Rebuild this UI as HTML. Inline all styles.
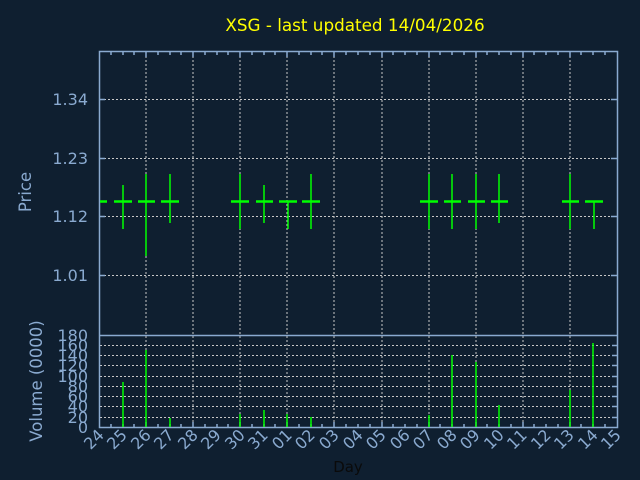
<!DOCTYPE html>
<html><head><meta charset="utf-8"><style>
html,body{margin:0;padding:0;background:#0f1f30;}
svg{display:block;font-family:"DejaVu Sans","Liberation Sans",sans-serif;}
</style></head><body>
<svg width="640" height="480" viewBox="0 0 640 480" xmlns="http://www.w3.org/2000/svg">
<rect width="640" height="480" fill="#0f1f30"/>
<text x="355" y="31" fill="#ffff00" font-size="16.8" text-anchor="middle">XSG - last updated 14/04/2026</text>
<g stroke="#c8c8c8" stroke-width="1" stroke-dasharray="2,2" fill="none">
<path d="M146 52V427M193 52V427M240 52V427M287 52V427M334 52V427M382 52V427M429 52V427M476 52V427M523 52V427M570 52V427"/>
<path d="M100 99.5H617M100 158.5H617M100 216.5H617M100 275.5H617"/>
<path d="M100 345.5H617M100 355.5H617M100 365.5H617M100 376.5H617M100 386.5H617M100 396.5H617M100 406.5H617M100 417.5H617"/>
</g>
<g stroke="#8aaad0" stroke-width="1.5" fill="none">
<path d="M99.5 51.5H617.5V427.5H99.5Z"/>
<path d="M99.5 335.5H617.5"/>
<path d="M111 52v3M123 52v3M134 52v3M146 52v5M158 52v3M170 52v3M181 52v3M193 52v5M205 52v3M217 52v3M228 52v3M240 52v5M252 52v3M264 52v3M275 52v3M287 52v5M299 52v3M311 52v3M322 52v3M334 52v5M346 52v3M358 52v3M370 52v3M382 52v5M393 52v3M405 52v3M417 52v3M429 52v5M440 52v3M452 52v3M464 52v3M476 52v5M487 52v3M499 52v3M511 52v3M523 52v5M534 52v3M546 52v3M558 52v3M570 52v5M581 52v3M593 52v3M605 52v3"/>
<path d="M111 427v-3M123 427v-3M134 427v-3M146 427v-5M158 427v-3M170 427v-3M181 427v-3M193 427v-5M205 427v-3M217 427v-3M228 427v-3M240 427v-5M252 427v-3M264 427v-3M275 427v-3M287 427v-5M299 427v-3M311 427v-3M322 427v-3M334 427v-5M346 427v-3M358 427v-3M370 427v-3M382 427v-5M393 427v-3M405 427v-3M417 427v-3M429 427v-5M440 427v-3M452 427v-3M464 427v-3M476 427v-5M487 427v-3M499 427v-3M511 427v-3M523 427v-5M534 427v-3M546 427v-3M558 427v-3M570 427v-5M581 427v-3M593 427v-3M605 427v-3"/>
<path d="M99 99.5h6M99 158.5h6M99 216.5h6M99 275.5h6M617 99.5h-6M617 158.5h-6M617 216.5h-6M617 275.5h-6"/>
<path d="M617 345.5h-5M617 355.5h-5M617 365.5h-5M617 376.5h-5M617 386.5h-5M617 396.5h-5M617 406.5h-5M617 417.5h-5"/>
</g>
<g fill="#8aaad0" font-size="16" text-anchor="end">
<text x="88" y="105">1.34</text>
<text x="88" y="164">1.23</text>
<text x="88" y="222">1.12</text>
<text x="88" y="281">1.01</text>
<text x="88" y="341">180</text>
<text x="88" y="351">160</text>
<text x="88" y="361">140</text>
<text x="88" y="371">120</text>
<text x="88" y="382">100</text>
<text x="88" y="392">80</text>
<text x="88" y="402">60</text>
<text x="88" y="412">40</text>
<text x="88" y="423">20</text>
<text x="88" y="433">0</text>
</g>
<text transform="translate(31,192) rotate(-90)" fill="#8aaad0" font-size="16.5" text-anchor="middle">Price</text>
<text transform="translate(42,381) rotate(-90)" fill="#8aaad0" font-size="16.5" text-anchor="middle">Volume (0000)</text>
<text x="348" y="472" fill="#0a0a0a" font-size="15" text-anchor="middle">Day</text>
<g fill="#8aaad0" font-size="16" text-anchor="end">
<text transform="translate(105,436) rotate(-45)">24</text>
<text transform="translate(128,436) rotate(-45)">25</text>
<text transform="translate(152,436) rotate(-45)">26</text>
<text transform="translate(175,436) rotate(-45)">27</text>
<text transform="translate(199,436) rotate(-45)">28</text>
<text transform="translate(222,436) rotate(-45)">29</text>
<text transform="translate(246,436) rotate(-45)">30</text>
<text transform="translate(269,436) rotate(-45)">31</text>
<text transform="translate(293,436) rotate(-45)">01</text>
<text transform="translate(316,436) rotate(-45)">02</text>
<text transform="translate(340,436) rotate(-45)">03</text>
<text transform="translate(364,436) rotate(-45)">04</text>
<text transform="translate(387,436) rotate(-45)">05</text>
<text transform="translate(411,436) rotate(-45)">06</text>
<text transform="translate(434,436) rotate(-45)">07</text>
<text transform="translate(458,436) rotate(-45)">08</text>
<text transform="translate(481,436) rotate(-45)">09</text>
<text transform="translate(505,436) rotate(-45)">10</text>
<text transform="translate(528,436) rotate(-45)">11</text>
<text transform="translate(552,436) rotate(-45)">12</text>
<text transform="translate(575,436) rotate(-45)">13</text>
<text transform="translate(599,436) rotate(-45)">14</text>
<text transform="translate(622,436) rotate(-45)">15</text>
</g>
<g stroke="#00ff00" fill="none">
<g stroke-width="1.5">
<path d="M123 185V229M146 174V256M170 174V223M240 174V229M264 185V223M288 201V229M311 174V229M429 174V229M452 174V229M476 174V229M499 174V223M570 174V229M594 201V229"/>
</g>
<g stroke-width="2.5">
<path d="M100 201.5H107M114 201.5H132M138 201.5H155M161 201.5H179M231 201.5H249M256 201.5H273M279 201.5H297M302 201.5H320M420 201.5H438M444 201.5H461M468 201.5H485M491 201.5H508M562 201.5H579M585 201.5H603"/>
</g>
<g stroke-width="1.5">
<path d="M123 427V382M146 427V350M170 427V418M240 427V414M264 427V410M287 427V414M311 427V417M429 427V415M452 427V355M476 427V362M499 427V405M570 427V390M593 427V343"/>
</g>
</g>
</svg>
</body></html>
